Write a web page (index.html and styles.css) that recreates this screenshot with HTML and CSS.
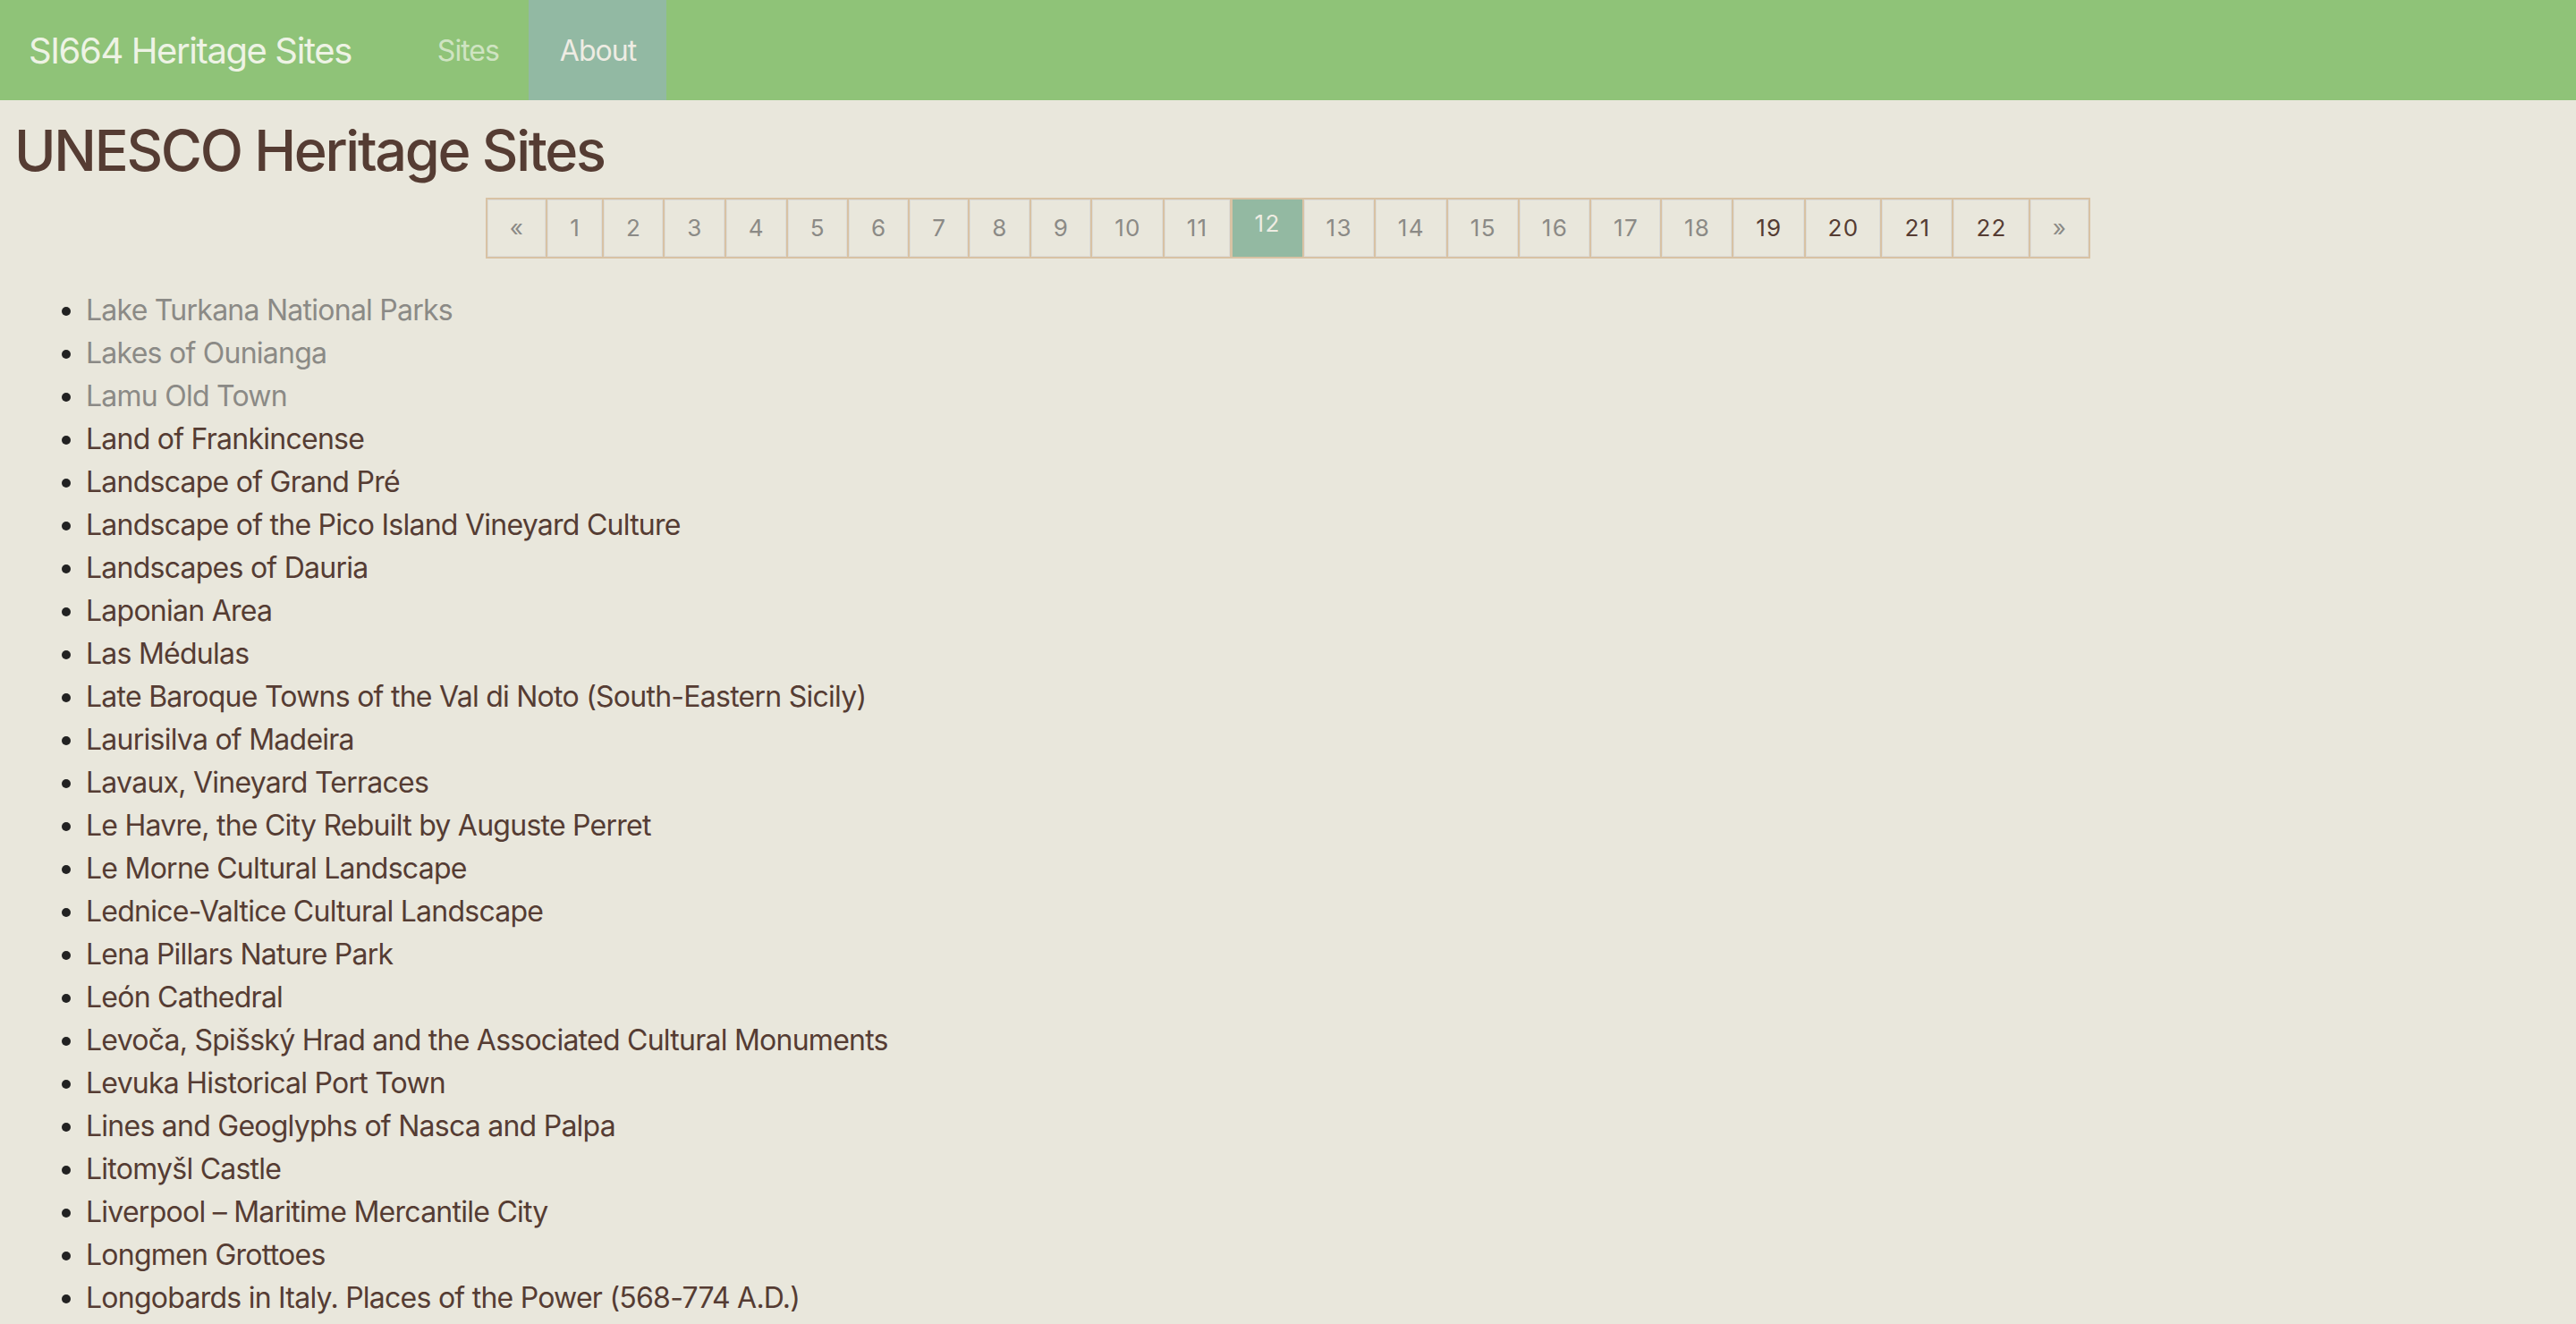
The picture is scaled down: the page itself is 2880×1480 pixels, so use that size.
FILE: index.html
```html
<!DOCTYPE html>
<html lang="en">
<head>
<meta charset="utf-8">
<title>UNESCO Heritage Sites</title>
<link rel="stylesheet" href="styles.css">
</head>
<body>
<nav class="navbar">
  <a class="brand" href="#">SI664 Heritage Sites</a>
  <div class="nav-links">
    <a class="nav-link" href="#">Sites</a>
    <a class="nav-link active" href="#">About</a>
  </div>
</nav>
<main class="content">
  <h1 class="title">UNESCO Heritage Sites</h1>
  <ul class="pagination">
    <li><a class="page visited" href="#">&laquo;</a></li>
    <li><a class="page visited" href="#">1</a></li>
    <li><a class="page visited" href="#">2</a></li>
    <li><a class="page visited" href="#">3</a></li>
    <li><a class="page visited" href="#">4</a></li>
    <li><a class="page visited" href="#">5</a></li>
    <li><a class="page visited" href="#">6</a></li>
    <li><a class="page visited" href="#">7</a></li>
    <li><a class="page visited" href="#">8</a></li>
    <li><a class="page visited" href="#">9</a></li>
    <li><a class="page visited" href="#">10</a></li>
    <li><a class="page visited" href="#">11</a></li>
    <li><span class="page current">12</span></li>
    <li><a class="page visited" href="#">13</a></li>
    <li><a class="page visited" href="#">14</a></li>
    <li><a class="page visited" href="#">15</a></li>
    <li><a class="page visited" href="#">16</a></li>
    <li><a class="page visited" href="#">17</a></li>
    <li><a class="page visited" href="#">18</a></li>
    <li><a class="page" href="#">19</a></li>
    <li><a class="page" href="#">20</a></li>
    <li><a class="page" href="#">21</a></li>
    <li><a class="page" href="#">22</a></li>
    <li><a class="page visited" href="#">&raquo;</a></li>
  </ul>
  <ul class="site-list">
    <li><a class="site visited" href="#">Lake Turkana National Parks</a></li>
    <li><a class="site visited" href="#">Lakes of Ounianga</a></li>
    <li><a class="site visited" href="#">Lamu Old Town</a></li>
    <li><a class="site" href="#">Land of Frankincense</a></li>
    <li><a class="site" href="#">Landscape of Grand Pré</a></li>
    <li><a class="site" href="#">Landscape of the Pico Island Vineyard Culture</a></li>
    <li><a class="site" href="#">Landscapes of Dauria</a></li>
    <li><a class="site" href="#">Laponian Area</a></li>
    <li><a class="site" href="#">Las Médulas</a></li>
    <li><a class="site" href="#">Late Baroque Towns of the Val di Noto (South-Eastern Sicily)</a></li>
    <li><a class="site" href="#">Laurisilva of Madeira</a></li>
    <li><a class="site" href="#">Lavaux, Vineyard Terraces</a></li>
    <li><a class="site" href="#">Le Havre, the City Rebuilt by Auguste Perret</a></li>
    <li><a class="site" href="#">Le Morne Cultural Landscape</a></li>
    <li><a class="site" href="#">Lednice-Valtice Cultural Landscape</a></li>
    <li><a class="site" href="#">Lena Pillars Nature Park</a></li>
    <li><a class="site" href="#">León Cathedral</a></li>
    <li><a class="site" href="#">Levoča, Spišský Hrad and the Associated Cultural Monuments</a></li>
    <li><a class="site" href="#">Levuka Historical Port Town</a></li>
    <li><a class="site" href="#">Lines and Geoglyphs of Nasca and Palpa</a></li>
    <li><a class="site" href="#">Litomyšl Castle</a></li>
    <li><a class="site" href="#">Liverpool – Maritime Mercantile City</a></li>
    <li><a class="site" href="#">Longmen Grottoes</a></li>
    <li><a class="site" href="#">Longobards in Italy. Places of the Power (568-774 A.D.)</a></li>
  </ul>
</main>
</body>
</html>
```

FILE: styles.css
```css
* {
  box-sizing: border-box;
}

html, body {
  margin: 0;
  padding: 0;
}

body {
  background: #e9e7dc;
  color: #212121;
  font-family: Inter, "Noto Sans", "Liberation Sans", sans-serif;
  overflow: hidden;
}

a {
  text-decoration: none;
}

.navbar {
  display: flex;
  align-items: stretch;
  height: 112px;
  background: #8fc378;
  padding-left: 32px;
}

.brand {
  display: flex;
  align-items: center;
  font-size: 40px;
  letter-spacing: -1.4px;
  color: #eef3e5;
  margin-right: 63px;
}

.nav-links {
  display: flex;
  align-items: stretch;
}

.nav-link {
  display: flex;
  align-items: center;
  padding: 0 33px;
  font-size: 32px;
  letter-spacing: -1px;
  color: #cfe4c2;
}

.nav-link.active {
  background: #92b9a3;
  color: #eeece3;
  padding: 0 34px 0 35px;
}

.content {
  padding: 0 16px;
}

.title {
  margin: 18px 0 0;
  font-size: 63px;
  font-weight: 500;
  line-height: 1.22;
  color: #553c33;
  letter-spacing: -2.3px;
}

.pagination {
  list-style: none;
  display: flex;
  width: max-content;
  margin: 14px auto 0;
  padding: 2px;
  gap: 2px;
  background: #d8c2a4;
}

.pagination li {
  display: flex;
}

.page {
  display: flex;
  align-items: center;
  justify-content: center;
  height: 64px;
  padding: 0 23px 0 24px;
  font-size: 26px;
  letter-spacing: 1.3px;
  background: #e9e7dc;
  border: 1px solid #dcdcd8;
  color: #553c33;
}

.page.visited {
  color: #8b8a86;
}

.page.current {
  background: #93b9a2;
  border-color: #93b9a2;
  color: #eeece3;
  align-items: flex-start;
  padding-top: 10px;
  margin-left: 1px;
}

.site-list {
  margin: 34px 0 0;
  padding-left: 80px;
  font-size: 32px;
  line-height: 48px;
  letter-spacing: -0.75px;
  color: #222;
}

.site {
  color: #553c33;
}

.site.visited {
  color: #8b8a86;
}
```
